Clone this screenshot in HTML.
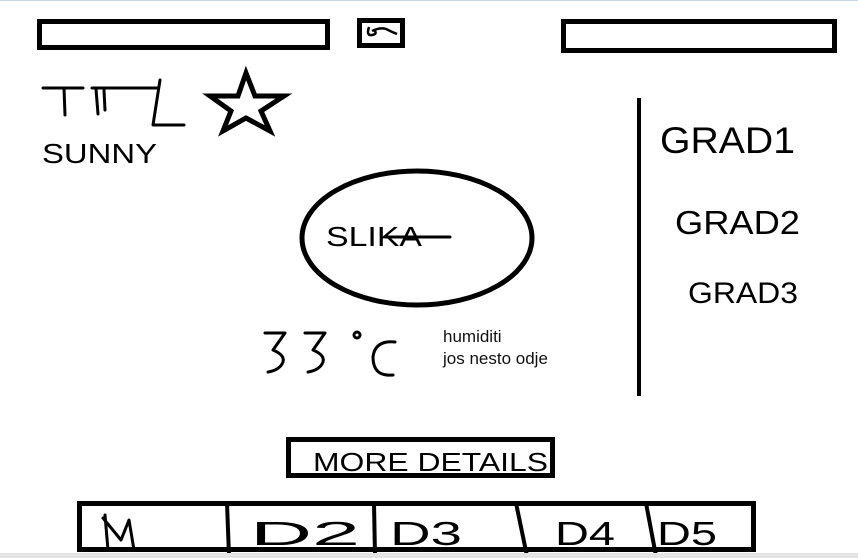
<!DOCTYPE html>
<html><head><meta charset="utf-8"><style>
html,body{margin:0;padding:0;background:#fff;width:858px;height:558px;overflow:hidden}
svg{display:block}
.h{font-family:"Liberation Sans",sans-serif;font-weight:normal;fill:#000}
</style></head><body>
<svg width="858" height="558" viewBox="0 0 858 558" xmlns="http://www.w3.org/2000/svg">
<rect x="0" y="0" width="858" height="1" fill="#c9d6e8"/>
<g fill="none" stroke="#000" stroke-width="5">
<rect x="39.5" y="21.5" width="288" height="26"/>
<rect x="359.5" y="20.5" width="43" height="25"/>
<rect x="563.5" y="21.5" width="271" height="29"/>
<ellipse cx="417" cy="238" rx="115" ry="67"/>
<rect x="288.5" y="439.5" width="264" height="36"/>
<rect x="79.5" y="503.5" width="674" height="46"/>
</g>
<path d="M369 27 q-3 9 3 8 q6-1 2-5 M372 31 q8-4 14-2 q6 3 11 5" fill="none" stroke="#000" stroke-width="2.5"/>
<path d="M246 73 L255 96 L284 96 L261 111 L270 131 L246 118 L223 131 L231 111 L210 96 L238 96 Z" fill="none" stroke="#000" stroke-width="5"/>
<g stroke="#000" stroke-width="4" fill="none">
<line x1="639" y1="98" x2="639" y2="396"/>
<line x1="227" y1="503" x2="229" y2="556"/>
<line x1="374" y1="503" x2="375" y2="556"/>
<line x1="516" y1="503" x2="527" y2="556"/>
<line x1="646" y1="503" x2="656" y2="556"/>
</g>
<g stroke="#000" stroke-width="3" fill="none" stroke-linecap="round" stroke-linejoin="round">
<path d="M43 88 h40 M64 88 l1 27 M92 88 h65 M96 89 l2 25 M104 90 l1 20 M160 80 l-7 45 h31"/>
<path d="M265 333 h20 l-12 17 q12 5 10 12 q-3 8 -15 10"/>
<path d="M305 333 h20 l-12 17 q12 5 10 12 q-3 8 -15 10"/>
<circle cx="357" cy="335" r="3"/>
<path d="M395 342 q-20 -2 -22 15 q0 20 20 18"/>
<path d="M385 237 h65"/>
<path d="M105 515 l3 35 M103 518 l18 22 l8 -20 l5 30"/>
</g>
<text class="h" transform="translate(42,163) scale(1,2)" font-size="14" textLength="115" lengthAdjust="spacingAndGlyphs">SUNNY</text>
<text class="h" transform="translate(326,246) scale(1,2)" font-size="14" textLength="96" lengthAdjust="spacingAndGlyphs">SLIKA</text>
<text x="443" y="342" font-family="Liberation Sans,sans-serif" font-size="17" fill="#111">humiditi</text>
<text x="443" y="364" font-family="Liberation Sans,sans-serif" font-size="17" fill="#111">jos nesto odje</text>
<text class="h" transform="translate(660,153) scale(1,2.3)" font-size="16" textLength="135" lengthAdjust="spacingAndGlyphs">GRAD1</text>
<text class="h" transform="translate(675,234) scale(1,2.2)" font-size="15" textLength="125" lengthAdjust="spacingAndGlyphs">GRAD2</text>
<text class="h" transform="translate(688,303) scale(1,2.1)" font-size="14" textLength="110" lengthAdjust="spacingAndGlyphs">GRAD3</text>
<text class="h" transform="translate(313,471) scale(1,2)" font-size="13" textLength="235" lengthAdjust="spacingAndGlyphs">MORE  DETAILS</text>
<text class="h" transform="translate(250,545) scale(1,2.2)" font-size="15" textLength="110" lengthAdjust="spacingAndGlyphs">D2</text>
<text class="h" transform="translate(390,545) scale(1,2.2)" font-size="15" textLength="72" lengthAdjust="spacingAndGlyphs">D3</text>
<text class="h" transform="translate(555,545) scale(1,2.2)" font-size="15" textLength="60" lengthAdjust="spacingAndGlyphs">D4</text>
<text class="h" transform="translate(657,545) scale(1,2.2)" font-size="15" textLength="60" lengthAdjust="spacingAndGlyphs">D5</text>
<rect x="0" y="553" width="858" height="5" fill="#e4e4e4"/>
</svg>
</body></html>
